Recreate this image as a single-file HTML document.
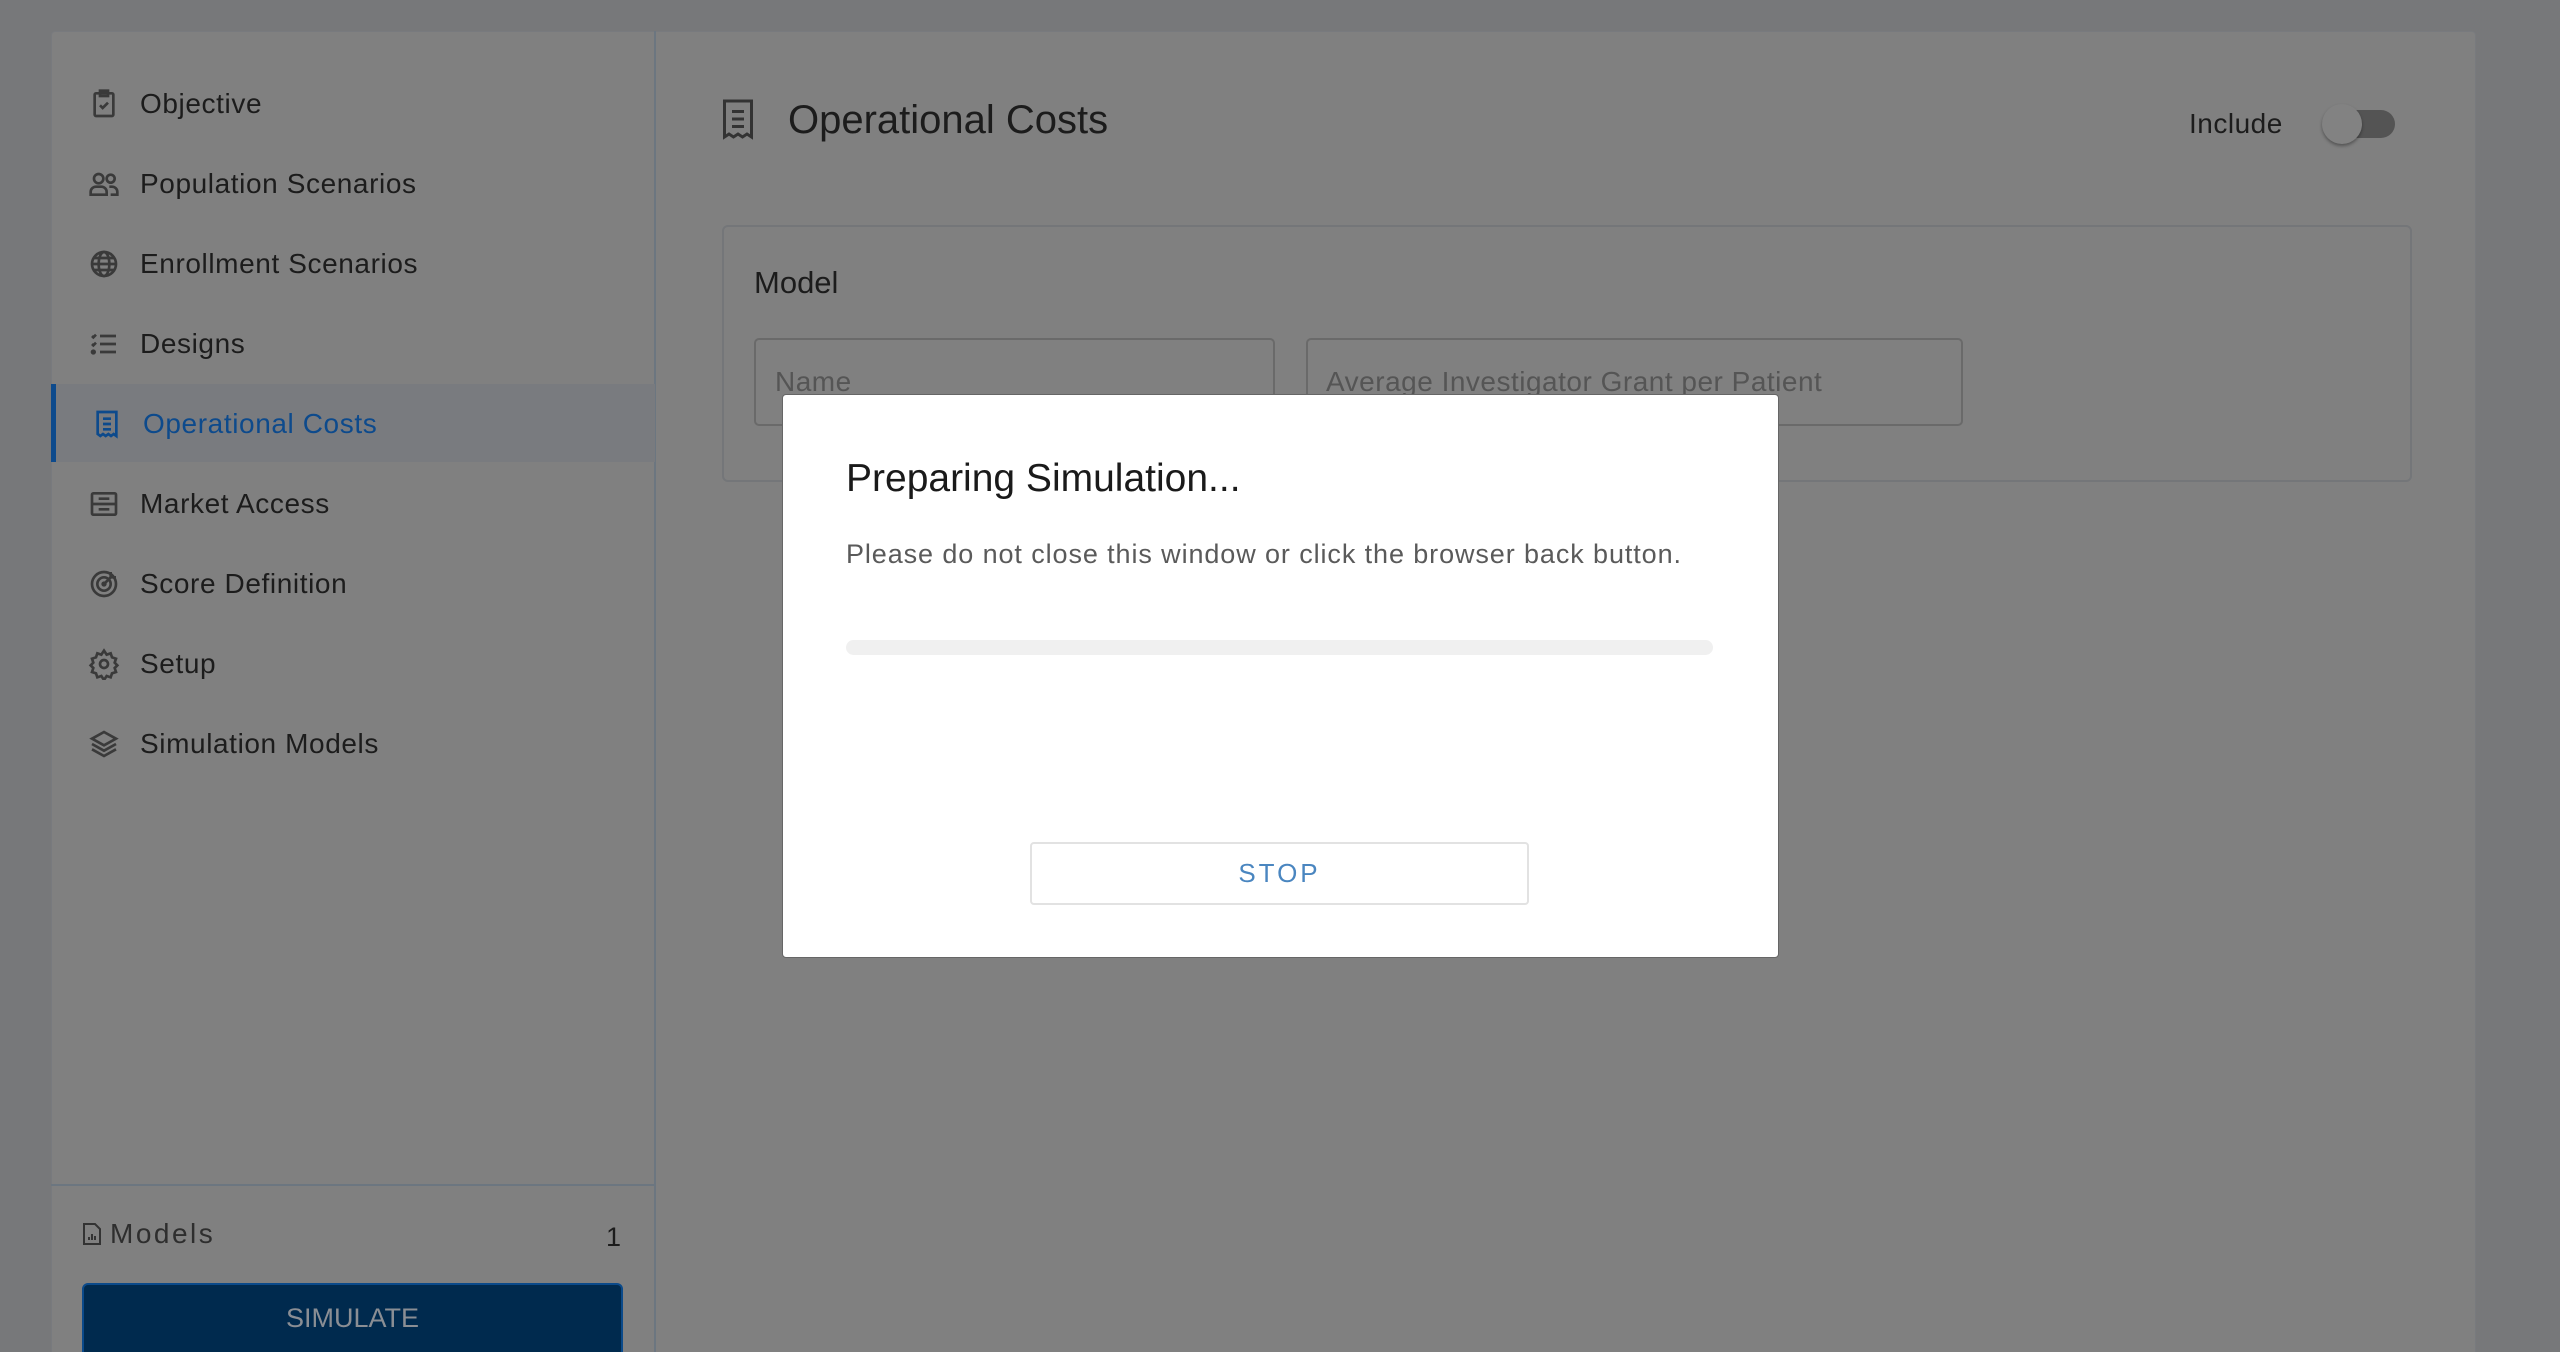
<!DOCTYPE html>
<html><head><meta charset="utf-8"><style>
*{margin:0;padding:0;box-sizing:border-box}
html,body{width:2560px;height:1352px;overflow:hidden}
body{background:#77787a;font-family:"Liberation Sans",sans-serif;position:relative;color:#1c1c1c}
.abs{position:absolute}
.panel{left:51px;top:31px;width:2425px;height:1321px;background:#808080;border:1px solid #787a7e;border-bottom:none;border-radius:4px 4px 0 0}
.side{left:51px;top:31px;width:605px;height:1321px;border-right:2px solid #6c7680}
.item{position:absolute;left:88px;font-size:28px;letter-spacing:0.6px;height:40px;line-height:40px;display:flex;align-items:center}
.item svg{width:32px;height:32px;margin-right:20px;fill:none;stroke:#3a3a3a;stroke-width:2}
</style></head><body>
<div class="abs panel"></div>
<div class="abs side"></div>
<div class="abs" style="left:51px;top:384px;width:604px;height:78px;background:#797b7f"></div>
<div class="abs" style="left:51px;top:384px;width:5px;height:78px;background:#0d4a8c"></div>

<div class="item" style="top:84px"><svg viewBox="0 0 24 24"><rect x="5" y="4" width="14" height="17" rx="1"/><rect x="9" y="2" width="6" height="4"/><path d="M9 13l2 2 4-4"/></svg>Objective</div>
<div class="item" style="top:164px"><svg viewBox="0 0 24 24"><circle cx="8" cy="8" r="3.5"/><circle cx="17" cy="8" r="3"/><path d="M2 20v-2a4 4 0 014-4h4a4 4 0 014 4v2zM16 14h2a4 4 0 014 4v2h-5"/></svg>Population Scenarios</div>
<div class="item" style="top:244px"><svg viewBox="0 0 24 24"><circle cx="12" cy="12" r="9"/><ellipse cx="12" cy="12" rx="4" ry="9"/><path d="M3 12h18M4.5 7.5h15M4.5 16.5h15"/></svg>Enrollment Scenarios</div>
<div class="item" style="top:324px"><svg viewBox="0 0 24 24"><path d="M9 6h12M9 12h12M9 18h12M3 6l1 1 2-2M3 12l1 1 2-2"/><circle cx="4" cy="18" r="1"/></svg>Designs</div>
<div class="item" style="top:404px;left:91px;color:#0d4a8c"><svg viewBox="0 0 24 24" style="stroke:#0d4a8c"><path d="M5 3h14v18l-2-1.5-2 1.5-2-1.5-2 1.5-2-1.5-2 1.5-2-1.5z"/><path d="M9 8h6M9 12h6M9 16h6"/></svg>Operational Costs</div>
<div class="item" style="top:484px"><svg viewBox="0 0 24 24"><rect x="3" y="4" width="18" height="16" rx="1"/><path d="M3 12h18M8 8h8M8 16h8"/></svg>Market Access</div>
<div class="item" style="top:564px"><svg viewBox="0 0 24 24"><circle cx="12" cy="12" r="9"/><circle cx="12" cy="12" r="5"/><circle cx="12" cy="12" r="1"/><path d="M12 12l7-7M17 3v4h4"/></svg>Score Definition</div>
<div class="item" style="top:644px"><svg viewBox="0 0 24 24"><circle cx="12" cy="12" r="3"/><path d="M12 2l2 3 3-1 1 3 3 1-1 3 2 2-2 2 1 3-3 1-1 3-3-1-2 3-2-3-3 1-1-3-3-1 1-3-2-2 2-2-1-3 3-1 1-3 3 1z"/></svg>Setup</div>
<div class="item" style="top:724px"><svg viewBox="0 0 24 24"><path d="M12 3l9 5-9 5-9-5z"/><path d="M3 12l9 5 9-5M3 16l9 5 9-5"/></svg>Simulation Models</div>

<div class="abs" style="left:51px;top:1184px;width:605px;height:2px;background:#6c7680"></div>
<div class="abs" style="left:80px;top:1218px;font-size:28px;letter-spacing:2.5px;color:#2e2e2e;display:flex;align-items:center"><svg viewBox="0 0 24 24" width="24" height="32" style="fill:none;stroke:#333;stroke-width:2;margin-right:6px"><path d="M4 2h11l5 5v15H4z"/><path d="M9 18v-3M12 18v-6M15 18v-4"/></svg>Models</div>
<div class="abs" style="left:606px;top:1222px;font-size:27px;color:#1c1c1c">1</div>
<div class="abs" style="left:82px;top:1283px;width:541px;height:80px;background:#002a4e;border:2px solid #0b4a8a;border-radius:6px;color:#8a8e94;font-size:27px;text-align:center;line-height:66px">SIMULATE</div>

<svg class="abs" style="left:720px;top:98px" width="36" height="42" viewBox="0 0 24 28" fill="none" stroke="#333" stroke-width="2"><path d="M3 2h18v24l-3-2-3 2-3-2-3 2-3-2-3 2z"/><path d="M8 9h8M8 14h8M8 19h8"/></svg>
<div class="abs" style="left:788px;top:98px;font-size:40px;color:#1c1c1c">Operational Costs</div>
<div class="abs" style="left:2189px;top:108px;font-size:28px;color:#1c1c1c;letter-spacing:0.5px">Include</div>
<div class="abs" style="left:2330px;top:110px;width:65px;height:28px;border-radius:14px;background:#545454"></div>
<div class="abs" style="left:2322px;top:104px;width:40px;height:40px;border-radius:50%;background:#828282;box-shadow:0 2px 3px rgba(0,0,0,.35)"></div>

<div class="abs" style="left:722px;top:225px;width:1690px;height:257px;border:2px solid #747679;border-radius:6px"></div>
<div class="abs" style="left:754px;top:265px;font-size:31px;color:#1c1c1c">Model</div>
<div class="abs" style="left:754px;top:338px;width:521px;height:88px;border:2px solid #6a6a6a;border-radius:5px"></div>
<div class="abs" style="left:775px;top:366px;font-size:28px;color:#555;letter-spacing:0.5px">Name</div>
<div class="abs" style="left:1306px;top:338px;width:657px;height:88px;border:2px solid #6a6a6a;border-radius:5px"></div>
<div class="abs" style="left:1326px;top:366px;font-size:28px;color:#555;letter-spacing:0.5px">Average Investigator Grant per Patient</div>

<div class="abs" style="left:782px;top:394px;width:997px;height:564px;background:#fff;border:1px solid #666;border-radius:4px"></div>
<div class="abs" style="left:846px;top:457px;font-size:39px;color:#1a1a1a">Preparing Simulation...</div>
<div class="abs" style="left:846px;top:539px;font-size:27px;letter-spacing:0.9px;color:#5a5a5a">Please do not close this window or click the browser back button.</div>
<div class="abs" style="left:846px;top:640px;width:867px;height:15px;border-radius:8px;background:#f0f0f0"></div>
<div class="abs" style="left:1030px;top:842px;width:499px;height:63px;border:2px solid #e2e2e2;border-radius:4px;text-align:center;line-height:59px;font-size:26px;letter-spacing:3px;color:#4a86c0">STOP</div>
</body></html>
